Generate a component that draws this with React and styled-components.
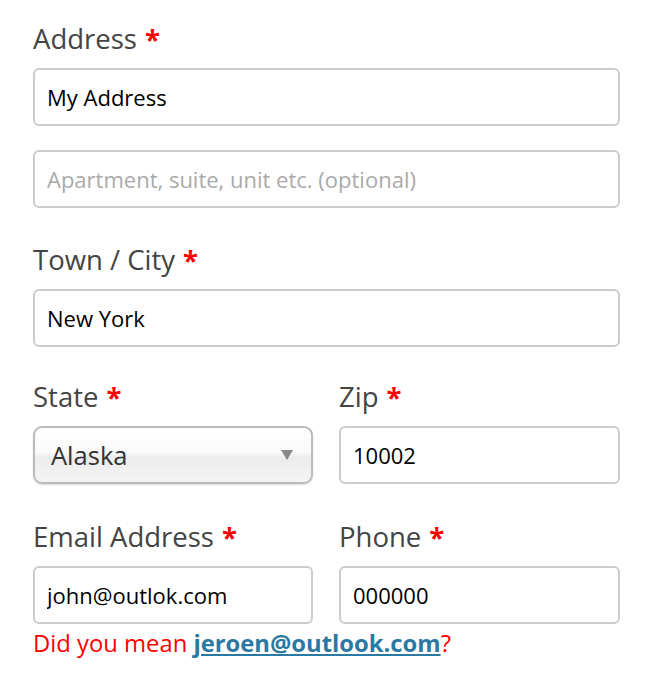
import React from "react";
import styled, { createGlobalStyle } from "styled-components";

const Global = createGlobalStyle`
  html, body { margin: 0; padding: 0; background: #fff; }
  body { font-family: "Open Sans", "Liberation Sans", sans-serif; }
`;

const Form = styled.form`
  width: 587px;
  padding: 20px 0 0 33px;
  display: flex;
  flex-direction: column;
`;

const Field = styled.div`
  display: flex;
  flex-direction: column;
  margin-bottom: ${(p) => p.$mb ?? 24}px;
`;

const Row = styled.div`
  display: grid;
  grid-template-columns: 280px 281px;
  column-gap: 26px;
  margin-bottom: ${(p) => p.$mb ?? 0}px;
`;

const Label = styled.label`
  font-size: 27.5px;
  line-height: 38px;
  color: #444;
  margin-bottom: 10px;
  white-space: nowrap;
`;

const Star = styled.span`
  color: #f00;
  font-weight: 700;
  margin-left: 8px;
`;

const Input = styled.input`
  box-sizing: border-box;
  width: 100%;
  height: 58px;
  border: 2px solid #ccc;
  border-radius: 6px;
  padding: 0 12px;
  font-family: inherit;
  font-size: 22px;
  color: #000;
  background: #fff;
  outline: none;
  &::placeholder { color: #aaa; }
`;

const Select = styled.div`
  box-sizing: border-box;
  height: 58px;
  border: 2px solid #bbb;
  border-radius: 9px;
  padding: 0 18px 0 16px;
  display: flex;
  align-items: center;
  justify-content: space-between;
  background: linear-gradient(#fff 0%, #fafafa 45%, #ececec 55%, #f4f4f4 100%);
  box-shadow: 0 1px 2px rgba(0,0,0,0.15);
  font-size: 25.5px;
  color: #333;
`;

const Arrow = styled.span`
  width: 0;
  height: 0;
  border-left: 6px solid transparent;
  border-right: 6px solid transparent;
  border-top: 10px solid #888;
`;

const Hint = styled.div`
  font-size: 23.8px;
  color: #f00;
  margin-top: 2px;
  line-height: 34px;
  white-space: nowrap;
  & a {
    color: #2a79a2;
    font-weight: 700;
    text-decoration: underline;
  }
`;

export default function App() {
  return (
    <>
      <Global />
      <Form>
        <Field $mb={24}>
          <Label>Address<Star>*</Star></Label>
          <Input defaultValue="My Address" />
        </Field>
        <Field $mb={33}>
          <Input placeholder="Apartment, suite, unit etc. (optional)" />
        </Field>
        <Field $mb={31}>
          <Label>Town / City<Star>*</Star></Label>
          <Input defaultValue="New York" />
        </Field>
        <Row $mb={34}>
          <Field $mb={0}>
            <Label>State<Star>*</Star></Label>
            <Select>
              <span>Alaska</span>
              <Arrow />
            </Select>
          </Field>
          <Field $mb={0}>
            <Label>Zip<Star>*</Star></Label>
            <Input defaultValue="10002" />
          </Field>
        </Row>
        <Row>
          <Field $mb={0}>
            <Label>Email Address<Star>*</Star></Label>
            <Input defaultValue="john@outlok.com" />
            <Hint>Did you mean <a href="#">jeroen@outlook.com</a>?</Hint>
          </Field>
          <Field $mb={0}>
            <Label>Phone<Star>*</Star></Label>
            <Input defaultValue="000000" />
          </Field>
        </Row>
      </Form>
    </>
  );
}
